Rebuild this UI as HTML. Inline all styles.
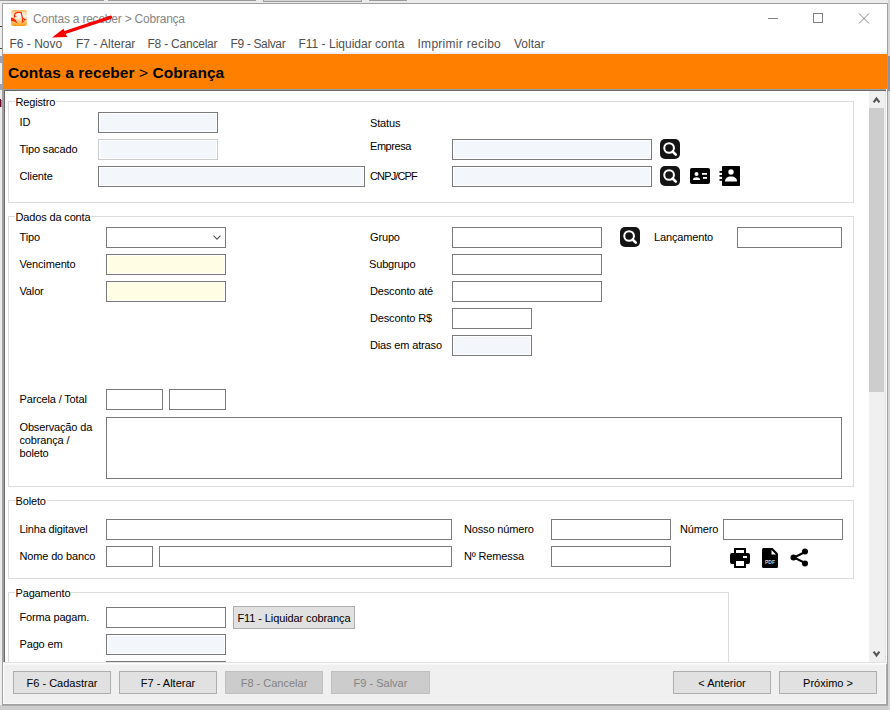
<!DOCTYPE html>
<html><head><meta charset="utf-8">
<style>
*{margin:0;padding:0;box-sizing:border-box}
html,body{width:890px;height:710px;overflow:hidden;background:#eeeeee;font-family:"Liberation Sans",sans-serif}
.a{position:absolute}
.t{position:absolute;white-space:nowrap;font-size:11px;line-height:11px;color:#000;letter-spacing:-0.15px}
.m{position:absolute;white-space:nowrap;font-size:12px;line-height:12px;color:#505050}
.in{position:absolute;border:1px solid #7a7a7a;background:#fff;height:21px}
.bl{background:#f3f6fa;box-shadow:inset 0 0 0 1px #fff}
.yl{background:#fffee4;box-shadow:inset 0 0 0 1px #fff}
.gb{position:absolute;border:1px solid #dcdcdc}
.gt{position:absolute;white-space:nowrap;font-size:11px;line-height:11px;color:#000;background:#fff;padding:0 1px;letter-spacing:-0.15px}
.btn{position:absolute;height:23px;border:1px solid #adadad;background:#e1e1e1;font-size:11px;line-height:23px;letter-spacing:-0.1px;text-align:center;color:#000;white-space:nowrap}
.dis{background:#cccccc;border-color:#bfbfbf;color:#838383}
</style></head><body>
<!-- outer background bits -->
<div class="a" style="left:0;top:0;width:890px;height:3px;background:#ebebeb"></div>
<div class="a" style="left:0;top:0;width:104px;height:1px;background:#9c9c9c"></div>
<div class="a" style="left:108px;top:0;width:148px;height:1px;background:#9c9c9c"></div>
<div class="a" style="left:263px;top:0;width:99px;height:2px;background:#d6d6d6;border-left:1px solid #9c9c9c;border-right:1px solid #9c9c9c;border-bottom:1px solid #9c9c9c"></div>
<div class="a" style="left:369px;top:0;width:38px;height:1px;background:#9c9c9c"></div>
<div class="a" style="left:0;top:705px;width:890px;height:5px;background:#cdcdcd"></div>
<div class="a" style="left:2px;top:705px;width:886px;height:1px;background:#ababab"></div>
<div class="a" style="left:888px;top:0;width:2px;height:710px;background:#d6d6d6"></div>

<div class="a" style="left:888px;top:56px;width:2px;height:35px;background:#9090a0"></div>
<div class="a" style="left:0;top:56px;width:2px;height:7px;background:#a0a0ae"></div>
<div class="a" style="left:0;top:84px;width:2px;height:6px;background:#a0a0ae"></div>
<div class="a" style="left:0;top:48px;width:2px;height:1px;background:#444"></div>
<div class="a" style="left:0;top:99px;width:1px;height:8px;background:#6a0828"></div><div class="a" style="left:1px;top:100px;width:1px;height:7px;background:#50a8e0"></div>
<div class="a" style="left:0;top:26px;width:2px;height:1px;background:#444"></div>
<!-- window -->
<div class="a" style="left:2px;top:3px;width:886px;height:702px;border:1px solid #a0a0a0;background:#fff"></div>

<!-- title bar -->
<svg class="a" style="left:11px;top:10px" width="16" height="16" viewBox="0 0 16 16">
<defs><linearGradient id="ig" x1="0" y1="0" x2="0" y2="1"><stop offset="0" stop-color="#ffb24a"/><stop offset="0.18" stop-color="#ffd8a6"/><stop offset="0.4" stop-color="#fff2e4"/><stop offset="0.68" stop-color="#ffd090"/><stop offset="1" stop-color="#ff9a0a"/></linearGradient>
<radialGradient id="rg" cx="0.6" cy="0.32" r="0.35"><stop offset="0" stop-color="#fff" stop-opacity="0.9"/><stop offset="1" stop-color="#fff" stop-opacity="0"/></radialGradient></defs>
<rect x="0" y="0" width="16" height="16" rx="2.5" fill="url(#ig)"/>
<rect x="0" y="0" width="16" height="16" rx="2.5" fill="url(#rg)"/>
<path d="M0 7.6 C2.2 7.8 4.8 9 6.4 13.3 C5 12.4 3.2 10.8 0 11.2 Z" fill="#ff2a00"/>
<path d="M3.4 7.4 L3.4 5 C3.7 3.5 5 2.6 6.4 2.4 L10.2 2.3 C10.6 4.5 11 6.6 11.6 8.4" stroke="#ff2a00" stroke-width="1.2" fill="none"/>
<path d="M3.2 5.5 L6 6.3 L3.4 7.3 Z" fill="#ff2a00"/>
<path d="M10.9 7.6 L15.5 9.6 L10.9 13.3 Z" fill="#ff2a00"/>
<path d="M12.1 9.2 L14 9.9 L12.2 11.2 Z" fill="#ffc8a0"/>
</svg>
<div class="m" style="left:33px;top:13px;font-size:12px;letter-spacing:-0.22px;color:#868686">Contas a receber &gt; Cobrança</div>
<div class="a" style="left:768px;top:18px;width:10px;height:1px;background:#808080"></div>
<div class="a" style="left:813px;top:13px;width:10px;height:10px;border:1px solid #808080"></div>
<svg class="a" style="left:858px;top:13px" width="12" height="11" viewBox="0 0 12 11"><path d="M1 0.5 L11 10.5 M11 0.5 L1 10.5" stroke="#858585" stroke-width="1"/></svg>

<!-- menu -->
<div class="m" style="left:9.5px;top:38px">F6 - Novo</div>
<div class="m" style="left:76px;top:38px">F7 - Alterar</div>
<div class="m" style="left:147.5px;top:38px;letter-spacing:-0.22px">F8 - Cancelar</div>
<div class="m" style="left:230.5px;top:38px;letter-spacing:-0.35px">F9 - Salvar</div>
<div class="m" style="left:298.5px;top:38px">F11 - Liquidar conta</div>
<div class="m" style="left:417.5px;top:38px;letter-spacing:0.28px">Imprimir recibo</div>
<div class="m" style="left:514px;top:38px">Voltar</div>
<div class="a" style="left:3px;top:52px;width:884px;height:2px;background:#f0f0f0"></div>

<!-- red arrow -->
<svg class="a" style="left:0;top:0" width="130" height="60" viewBox="0 0 130 60">
<path d="M110.5 17.3 L62 33.5" stroke="#f60000" stroke-width="3.4" stroke-linecap="round"/>
<path d="M52 37.5 L63.5 28.8 L67.2 37 Z" fill="#f60000"/>
</svg>

<!-- orange header -->
<div class="a" style="left:3px;top:54px;width:884px;height:35px;background:#ff8000"></div>
<div class="a" style="left:8px;top:64px;white-space:nowrap;font-size:15.5px;line-height:17px;letter-spacing:0.05px;font-weight:bold;color:#000">Contas a receber <span style="font-weight:normal">&gt;</span> Cobrança</div>
<div class="a" style="left:3px;top:89px;width:883px;height:1px;background:#a0a0a0"></div>
<div class="a" style="left:3px;top:89px;width:1px;height:573px;background:#a0a0a0"></div>
<div class="a" style="left:4px;top:90px;width:882px;height:1px;background:#696969"></div>
<div class="a" style="left:886px;top:89px;width:1px;height:575px;background:#fff"></div>
<div class="a" style="left:4px;top:90px;width:1px;height:572px;background:#696969"></div>

<!-- scrollbar -->
<div class="a" style="left:869px;top:91px;width:16px;height:571px;background:#f0f0f0"></div>
<div class="a" style="left:885px;top:91px;width:1px;height:571px;background:#e3e3e3"></div>
<div class="a" style="left:869px;top:108px;width:15px;height:284px;background:#cdcdcd"></div>
<svg class="a" style="left:872px;top:96px" width="9" height="8" viewBox="0 0 9 8"><path d="M1.6 6.4 L4.5 2.6 L7.4 6.4" stroke="#555" stroke-width="2.1" fill="none"/></svg>
<svg class="a" style="left:872px;top:650px" width="9" height="8" viewBox="0 0 9 8"><path d="M1.6 1.6 L4.5 5.4 L7.4 1.6" stroke="#555" stroke-width="2.1" fill="none"/></svg>

<!-- Registro -->
<div class="gb" style="left:8px;top:101px;width:846px;height:102px"></div>
<div class="gt" style="left:14.5px;top:97px">Registro</div>
<div class="t" style="left:19.5px;top:117px">ID</div>
<div class="in bl" style="left:98px;top:112px;width:120px"></div>
<div class="t" style="left:19.5px;top:144px">Tipo sacado</div>
<div class="in bl" style="left:98px;top:139px;width:120px;border-color:#cccccc"></div>
<div class="t" style="left:19.5px;top:171px">Cliente</div>
<div class="in bl" style="left:98px;top:166px;width:267px"></div>
<div class="t" style="left:370px;top:118px">Status</div>
<div class="t" style="left:370px;top:141px;letter-spacing:-0.45px">Empresa</div>
<div class="in bl" style="left:452px;top:139px;width:200px"></div>
<div class="t" style="left:370px;top:171px;letter-spacing:-0.85px">CNPJ/CPF</div>
<div class="in bl" style="left:452px;top:166px;width:200px"></div>

<!-- search icons -->
<svg class="a" style="left:660px;top:139px" width="20" height="20" viewBox="0 0 20 20"><rect width="20" height="20" rx="5" fill="#141414"/><circle cx="9.1" cy="9" r="4.85" stroke="#fff" stroke-width="2" fill="none"/><path d="M12.6 12.5 L15.8 15.6" stroke="#fff" stroke-width="2.6" stroke-linecap="round"/></svg>
<svg class="a" style="left:660px;top:166px" width="20" height="20" viewBox="0 0 20 20"><rect width="20" height="20" rx="5" fill="#141414"/><circle cx="9.1" cy="9" r="4.85" stroke="#fff" stroke-width="2" fill="none"/><path d="M12.6 12.5 L15.8 15.6" stroke="#fff" stroke-width="2.6" stroke-linecap="round"/></svg>
<!-- id card -->
<svg class="a" style="left:690px;top:168px" width="20" height="16" viewBox="0 0 20 16"><rect width="20" height="16" rx="2" fill="#000"/><circle cx="6.5" cy="6" r="2" fill="#fff"/><path d="M2.8 12 C3 9.8 4.5 9.2 6.5 9.2 C8.5 9.2 10 9.8 10.2 12 Z" fill="#fff"/><rect x="12" y="5" width="5" height="1.8" fill="#fff"/><rect x="13" y="9" width="4" height="1.8" fill="#fff"/></svg>
<!-- contact book -->
<svg class="a" style="left:719px;top:166px" width="22" height="20" viewBox="0 0 22 20"><rect x="3" y="0" width="18" height="20" rx="1" fill="#000"/><rect x="0.5" y="5" width="3.5" height="1.8" fill="#000"/><rect x="0.5" y="9" width="3.5" height="1.8" fill="#000"/><rect x="0.5" y="13" width="3.5" height="1.8" fill="#000"/><circle cx="12" cy="6" r="2.7" fill="#fff"/><path d="M6 15.5 C6 12 8.5 10.5 12 10.5 C15.5 10.5 18 12 18 15.5 Z" fill="#fff"/></svg>

<!-- Dados da conta -->
<div class="gb" style="left:8px;top:216px;width:846px;height:271px"></div>
<div class="gt" style="left:14.5px;top:212px">Dados da conta</div>
<div class="t" style="left:19.5px;top:232px">Tipo</div>
<div class="in" style="left:106px;top:227px;width:120px"></div>
<svg class="a" style="left:213px;top:235px" width="8" height="5" viewBox="0 0 8 5"><path d="M0.5 0.6 L4 4.1 L7.5 0.6" stroke="#555" stroke-width="1.1" fill="none"/></svg>
<div class="t" style="left:19.5px;top:259px">Vencimento</div>
<div class="in yl" style="left:106px;top:254px;width:120px"></div>
<div class="t" style="left:19.5px;top:286px">Valor</div>
<div class="in yl" style="left:106px;top:281px;width:120px"></div>
<div class="t" style="left:19.5px;top:394px">Parcela / Total</div>
<div class="in" style="left:106px;top:389px;width:57px"></div>
<div class="in" style="left:169px;top:389px;width:57px"></div>
<div class="t" style="left:19.5px;top:421px;line-height:13px">Observação da<br>cobrança /<br>boleto</div>
<div class="in" style="left:106px;top:417px;width:736px;height:62px"></div>

<div class="t" style="left:370px;top:232px">Grupo</div>
<div class="in" style="left:452px;top:227px;width:150px"></div>
<div class="t" style="left:369px;top:259px">Subgrupo</div>
<div class="in" style="left:452px;top:254px;width:150px"></div>
<div class="t" style="left:370px;top:286px">Desconto até</div>
<div class="in" style="left:452px;top:281px;width:150px"></div>
<div class="t" style="left:370px;top:313px">Desconto R$</div>
<div class="in" style="left:452px;top:308px;width:80px"></div>
<div class="t" style="left:370px;top:340px">Dias em atraso</div>
<div class="in bl" style="left:452px;top:335px;width:80px"></div>
<svg class="a" style="left:620px;top:227px" width="20" height="20" viewBox="0 0 20 20"><rect width="20" height="20" rx="5" fill="#141414"/><circle cx="9.1" cy="9" r="4.85" stroke="#fff" stroke-width="2" fill="none"/><path d="M12.6 12.5 L15.8 15.6" stroke="#fff" stroke-width="2.6" stroke-linecap="round"/></svg>
<div class="t" style="left:654px;top:232px">Lançamento</div>
<div class="in" style="left:737px;top:227px;width:105px"></div>

<!-- Boleto -->
<div class="gb" style="left:8px;top:500px;width:846px;height:79px"></div>
<div class="gt" style="left:14.5px;top:496px">Boleto</div>
<div class="t" style="left:19.5px;top:524px">Linha digitavel</div>
<div class="in" style="left:106px;top:519px;width:346px"></div>
<div class="t" style="left:19.5px;top:551px">Nome do banco</div>
<div class="in" style="left:106px;top:546px;width:47px"></div>
<div class="in" style="left:159px;top:546px;width:293px"></div>
<div class="t" style="left:464px;top:524px">Nosso número</div>
<div class="in" style="left:551px;top:519px;width:120px"></div>
<div class="t" style="left:464px;top:551px">Nº Remessa</div>
<div class="in" style="left:551px;top:546px;width:120px"></div>
<div class="t" style="left:680px;top:524px">Número</div>
<div class="in" style="left:723px;top:519px;width:120px"></div>
<!-- printer -->
<svg class="a" style="left:730px;top:548px" width="20" height="20" viewBox="0 0 20 20"><rect x="4" y="0" width="12" height="5" fill="#000"/><rect x="6" y="2" width="8" height="3" fill="#fff"/><rect x="0" y="5" width="20" height="11" rx="2" fill="#000"/><rect x="4" y="13" width="12" height="7" fill="#000"/><rect x="6" y="13" width="8" height="5" fill="#fff"/><rect x="13" y="8" width="4" height="2" fill="#fff"/></svg>
<!-- pdf -->
<svg class="a" style="left:762px;top:548px" width="17" height="20" viewBox="0 0 17 20"><path d="M1.5 0 L10.5 0 L16 5.5 L16 18.5 Q16 20 14.5 20 L1.5 20 Q0 20 0 18.5 L0 1.5 Q0 0 1.5 0 Z" fill="#000"/><path d="M9.5 2 L14 6.5 L9.5 6.5 Z" fill="#fff"/><text x="8" y="15.8" font-size="5" font-weight="bold" text-anchor="middle" fill="#d0d0d0" font-family="Liberation Sans">PDF</text></svg>
<!-- share -->
<svg class="a" style="left:790px;top:548px" width="19" height="19" viewBox="0 0 19 19"><path d="M15 4 L4 9.5 L15 15" stroke="#000" stroke-width="2" fill="none"/><circle cx="15" cy="3.5" r="3" fill="#000"/><circle cx="3.5" cy="9.5" r="3" fill="#000"/><circle cx="15" cy="15.5" r="3" fill="#000"/></svg>

<!-- Pagamento -->
<div class="gb" style="left:8px;top:592px;width:721px;height:90px"></div>
<div class="gt" style="left:14.5px;top:588px">Pagamento</div>
<div class="t" style="left:19.5px;top:612px">Forma pagam.</div>
<div class="in" style="left:106px;top:607px;width:120px"></div>
<div class="btn" style="left:233px;top:606px;width:122px">F11 - Liquidar cobrança</div>
<div class="t" style="left:19.5px;top:639px">Pago em</div>
<div class="in bl" style="left:106px;top:634px;width:120px"></div>
<div class="in" style="left:106px;top:661px;width:120px"></div>

<!-- bottom panel -->
<div class="a" style="left:3px;top:662px;width:884px;height:42px;background:#f0f0f0;border-top:1px solid #e3e3e3;border-left:1px solid #fff"></div>
<div class="a" style="left:3px;top:663px;width:883px;height:1px;background:#fcfcfc"></div>
<div class="a" style="left:3px;top:664px;width:883px;height:1px;background:#f7f7f7"></div>
<div class="a" style="left:886px;top:664px;width:1px;height:40px;background:#a8a8a8"></div>
<div class="a" style="left:3px;top:703px;width:883px;height:1px;background:#f8f8f8"></div>
<div class="a" style="left:885px;top:664px;width:1px;height:40px;background:#f8f8f8"></div>
<div class="btn" style="left:13px;top:671px;width:98px;letter-spacing:0">F6 - Cadastrar</div>
<div class="btn" style="left:119px;top:671px;width:98px;letter-spacing:0">F7 - Alterar</div>
<div class="btn dis" style="left:225px;top:671px;width:98px;letter-spacing:0">F8 - Cancelar</div>
<div class="btn dis" style="left:331px;top:671px;width:99px;letter-spacing:0">F9 - Salvar</div>
<div class="btn" style="left:673px;top:671px;width:98px;letter-spacing:0">&lt; Anterior</div>
<div class="btn" style="left:779px;top:671px;width:98px;letter-spacing:0">Próximo &gt;</div>
</body></html>
